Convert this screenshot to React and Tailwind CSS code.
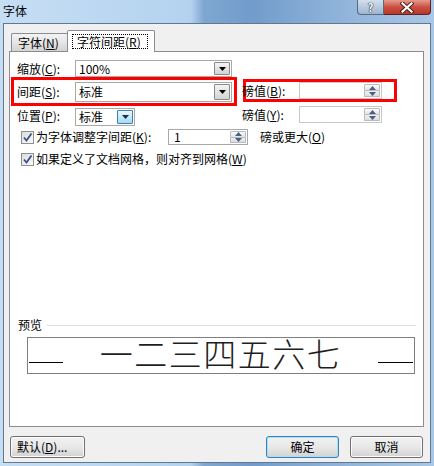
import React from 'react';

const Tri = ({ color = '#000' }) => (
  <svg width="7" height="4" viewBox="0 0 7 4">
    <path d="M0 0H7L3.5 4Z" fill={color} />
  </svg>
);

const Arrow = ({ up }) => (
  <svg width="7" height="4" viewBox="0 0 7 4">
    <path d={up ? 'M0 4H7L3.5 0Z' : 'M0 0H7L3.5 4Z'} fill="#4a5f86" />
  </svg>
);

const Combo = ({ className, value, hot }) => (
  <div className={`flex bg-white border border-[#a9a9a9] p-[1px] ${className}`}>
    <span className="flex-1 flex items-center pl-[2px]">{value}</span>
    <div
      className={
        hot
          ? 'w-[16px] flex items-center justify-center border border-[#3c7fb1] rounded-[1px] bg-gradient-to-b from-[#eaf6fd] to-[#a7d9f5]'
          : 'w-[16px] flex items-center justify-center border border-[#8a8a8a] rounded-[1px] bg-gradient-to-b from-[#f4f4f4] to-[#d3d3d3]'
      }
    >
      <Tri color={hot ? '#1c2f4a' : '#000'} />
    </div>
  </div>
);

const Spin = ({ className, value, light }) => (
  <div className={`flex bg-white border p-[1px] ${light ? 'border-[#c8c8c8]' : 'border-[#a9a9a9]'} ${className}`}>
    <span className="flex-1 flex items-center pl-[4px]">{value}</span>
    <div className="w-[16px] flex flex-col">
      <div className="flex-1 flex items-center justify-center border border-[#b8bcc2] rounded-t-[1px] bg-gradient-to-b from-[#fbfbfb] to-[#e4e4e4]">
        <Arrow up />
      </div>
      <div className="flex-1 flex items-center justify-center border border-t-0 border-[#b8bcc2] rounded-b-[1px] bg-gradient-to-b from-[#f2f2f2] to-[#dcdcdc]">
        <Arrow />
      </div>
    </div>
  </div>
);

const Check = () => (
  <div className="w-[13px] h-[13px] border border-[#8e8f8f] bg-gradient-to-br from-[#dcdcdc] to-[#fbfbfb] flex items-center justify-center">
    <svg width="11" height="11" viewBox="0 0 11 11">
      <path d="M2 5.5L4.5 8.5L9.5 1.5" fill="none" stroke="#3d4f88" strokeWidth="1.8" />
    </svg>
  </div>
);

const Btn = ({ className, children, focus }) => (
  <div
    className={
      focus
        ? `h-[22px] flex items-center justify-center rounded-[3px] border border-[#3c7fb1] bg-gradient-to-b from-[#f2f2f2] via-[#e8e8e8] to-[#d2d2d2] shadow-[inset_0_0_0_1px_#a6e0fb] ${className}`
        : `h-[22px] flex items-center justify-center rounded-[3px] border border-[#707070] bg-gradient-to-b from-[#f2f2f2] via-[#e8e8e8] to-[#d2d2d2] shadow-[inset_0_0_0_1px_#fcfcfc] ${className}`
    }
  >
    {children}
  </div>
);

const K = ({ c }) => (
  <>
    (<span className="underline underline-offset-[1px]">{c}</span>)
  </>
);

export default function App() {
  return (
    <div className="w-[434px] h-[466px] flex flex-col text-[12px] leading-[14px] text-black font-['Noto_Sans_CJK_SC',sans-serif] bg-[linear-gradient(to_right,#c6def4_0%,#b4d2ef_44%,#7ea6d0_47%,#719ccb_58%,#8cb1d9_76%,#a9c7e6_100%)]">
      {/* title bar */}
      <div className="h-[23px] flex items-start">
        <span className="ml-[3px] mt-[4px]">字体</span>
        <div className="ml-auto mr-[3px] flex">
          <div className="w-[27px] h-[15px] flex items-center justify-center border border-t-0 border-[#566a84] rounded-bl-[4px] bg-gradient-to-b from-[#d3dfec] to-[#9eb5cf] text-white font-bold text-[11px] leading-[11px] [text-shadow:0_0_1px_#1e2a3a,0_0_1px_#1e2a3a,0_0_1px_#1e2a3a]">
            ?
          </div>
          <div className="w-[47px] h-[15px] flex items-center justify-center border border-t-0 border-l-0 border-[#5a2520] rounded-br-[4px] bg-gradient-to-b from-[#e49c90] via-[#cb4f42] to-[#b8382a]">
            <svg width="14" height="11" viewBox="0 0 14 11">
              <path d="M2.5 1.5L11.5 9.5M11.5 1.5L2.5 9.5" stroke="#4a1a14" strokeWidth="4" strokeLinecap="square" />
              <path d="M2.5 1.5L11.5 9.5M11.5 1.5L2.5 9.5" stroke="#fff" strokeWidth="2.2" strokeLinecap="square" />
            </svg>
          </div>
        </div>
      </div>

      {/* client area */}
      <div className="flex-1 mx-[3px] mb-[3px] border border-[#62788f] bg-[#f0f0f0] flex flex-col">
        {/* tabs */}
        <div className="mt-[6px] ml-[7px] flex items-end">
          <div className="w-[56px] h-[18px] border border-r-0 border-b-0 border-[#898c95] rounded-tl-[2px] bg-gradient-to-b from-[#f3f3f3] via-[#e6e6e6] to-[#d3d3d3] flex items-center pl-[6px]">
            字体<K c="N" />
          </div>
          <div className="w-[88px] h-[22px] -mb-px relative z-10 border border-b-0 border-[#898c95] rounded-t-[2px] bg-white pl-[4px] pt-[3px]">
            <div className="w-[76px] h-[15px] border border-dotted border-black flex items-center pl-[4px]">
              字符间距<K c="R" />
            </div>
          </div>
        </div>

        {/* tab panel */}
        <div className="ml-[5px] w-[415px] h-[376px] border border-[#898c95] bg-white flex flex-col pt-[8px]">
          <div className="flex h-[17px] items-center">
            <span className="w-[65px] pl-[7px]">缩放<K c="C" />:</span>
            <Combo className="w-[157px] h-[17px]" value="100%" />
          </div>

          <div className="flex items-start">
            <div className="ml-[1px] w-[226px] h-[29px] border-[3px] border-[#ff0000] flex items-center">
              <span className="w-[61px] pl-[3px]">间距<K c="S" />:</span>
              <Combo className="w-[157px] h-[20px]" value="标准" />
            </div>
            <div className="ml-[6px] mt-[2px] w-[154px] h-[23px] border-[3px] border-[#ff0000] flex items-center">
              <span className="-ml-[4px] w-[57px]">磅值<K c="B" />:</span>
              <Spin className="w-[83px] h-[17px]" light value="" />
            </div>
          </div>

          <div className="flex h-[20px] items-start">
            <span className="w-[65px] pl-[7px] mt-[3px]">位置<K c="P" />:</span>
            <Combo className="w-[60px] h-[18px] mt-[2px]" value="标准" hot />
            <span className="ml-[107px] w-[57px] mt-[2px]">磅值<K c="Y" />:</span>
            <Spin className="w-[83px] h-[17px]" light value="" />
          </div>

          <div className="mt-[3px] flex h-[16px] items-center">
            <div className="ml-[11px]"><Check /></div>
            <span className="ml-[2px] w-[132px]">为字体调整字间距<K c="K" />:</span>
            <Spin className="w-[80px] h-[16px]" value="1" />
            <span className="ml-[12px]">磅或更大<K c="O" /></span>
          </div>

          <div className="mt-[6px] flex h-[16px] items-center">
            <div className="ml-[11px]"><Check /></div>
            <span className="ml-[2px]">如果定义了文档网格，则对齐到网格<K c="W" /></span>
          </div>

          <div className="mt-[152px] flex h-[12px] items-center">
            <span className="ml-[8px]">预览</span>
            <div className="ml-[5px] mr-[7px] flex-1 h-px bg-[#d5dfe5]" />
          </div>

          <div className="mt-[6px] ml-[17px] w-[388px] h-[37px] border border-[#7f7f7f] flex items-end">
            <div className="ml-[1px] mb-[10px] w-[34px] h-px bg-black" />
            <div className="flex-1 self-stretch flex items-center justify-center">
              <span className="text-[33px] leading-[33px] tracking-[1.5px] font-extralight text-[#1e1e1e] -mt-[5px]">一二三四五六七</span>
            </div>
            <div className="mr-px mb-[10px] w-[35px] h-px bg-black" />
          </div>
        </div>

        {/* buttons */}
        <div className="mt-[9px] flex">
          <Btn className="ml-[6px] w-[75px] justify-start pl-[6px]">默认<K c="D" />...</Btn>
          <div className="ml-auto mr-[7px] flex gap-[11px]">
            <Btn className="w-[73px]" focus>确定</Btn>
            <Btn className="w-[73px]">取消</Btn>
          </div>
        </div>
      </div>
    </div>
  );
}
